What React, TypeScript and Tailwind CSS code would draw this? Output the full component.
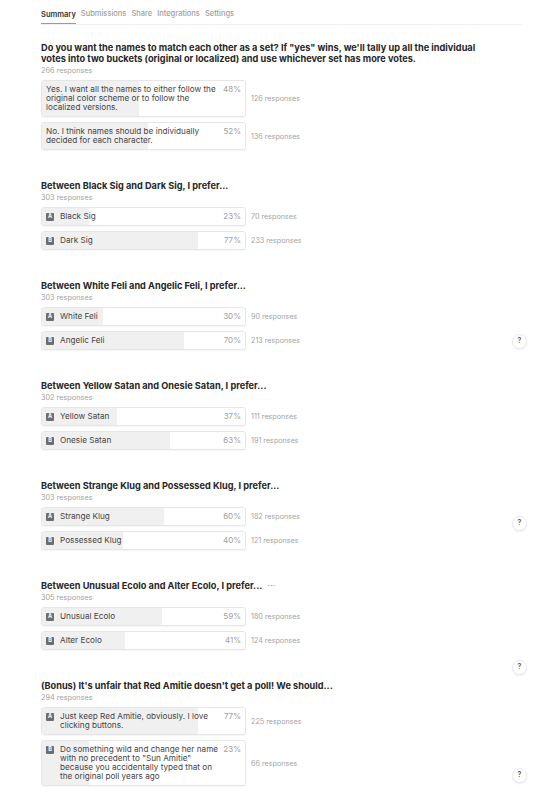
import React from "react";

type Opt = { letter?: string; text: string; pct: number; count: number };
type Q = { title: string; responses: number; options: Opt[]; dots?: boolean };

const questions: Q[] = [
  {
    title:
      'Do you want the names to match each other as a set? If "yes" wins, we\'ll tally up all the individual votes into two buckets (original or localized) and use whichever set has more votes.',
    responses: 266,
    options: [
      { text: "Yes. I want all the names to either follow the original color scheme or to follow the localized versions.", pct: 48, count: 126 },
      { text: "No. I think names should be individually decided for each character.", pct: 52, count: 136 },
    ],
  },
  {
    title: "Between Black Sig and Dark Sig, I prefer...",
    responses: 303,
    options: [
      { letter: "A", text: "Black Sig", pct: 23, count: 70 },
      { letter: "B", text: "Dark Sig", pct: 77, count: 233 },
    ],
  },
  {
    title: "Between White Feli and Angelic Feli, I prefer...",
    responses: 303,
    options: [
      { letter: "A", text: "White Feli", pct: 30, count: 90 },
      { letter: "B", text: "Angelic Feli", pct: 70, count: 213 },
    ],
  },
  {
    title: "Between Yellow Satan and Onesie Satan, I prefer...",
    responses: 302,
    options: [
      { letter: "A", text: "Yellow Satan", pct: 37, count: 111 },
      { letter: "B", text: "Onesie Satan", pct: 63, count: 191 },
    ],
  },
  {
    title: "Between Strange Klug and Possessed Klug, I prefer...",
    responses: 303,
    options: [
      { letter: "A", text: "Strange Klug", pct: 60, count: 182 },
      { letter: "B", text: "Possessed Klug", pct: 40, count: 121 },
    ],
  },
  {
    title: "Between Unusual Ecolo and Alter Ecolo, I prefer...",
    responses: 305,
    dots: true,
    options: [
      { letter: "A", text: "Unusual Ecolo", pct: 59, count: 180 },
      { letter: "B", text: "Alter Ecolo", pct: 41, count: 124 },
    ],
  },
  {
    title: "(Bonus) It's unfair that Red Amitie doesn't get a poll! We should...",
    responses: 294,
    options: [
      { letter: "A", text: "Just keep Red Amitie, obviously. I love clicking buttons.", pct: 77, count: 225 },
      { letter: "B", text: 'Do something wild and change her name with no precedent to "Sun Amitie" because you accidentally typed that on the original poll years ago', pct: 23, count: 66 },
    ],
  },
];

function Option({ o }: { o: Opt }) {
  return (
    <div className="flex items-center">
      <div className="relative w-[205px] shrink-0 overflow-hidden rounded-[3px] border border-[#e6e6e6] bg-white shadow-[0_1px_1px_rgba(0,0,0,0.04)]">
        <div className="absolute left-0 top-0 bottom-0 bg-[#f0f0f0]" style={{ width: `${o.pct}%` }} />
        <div className="relative flex items-start px-[4px] py-[4px]">
          {o.letter && (
            <div className="mt-[0.5px] mr-[6px] flex h-[8px] w-[8px] shrink-0 items-center justify-center rounded-[1px] bg-[#6e6e6e] text-[5.5px] font-bold leading-none text-white">
              {o.letter}
            </div>
          )}
          <div className="flex-1 pr-[4px] text-[8.2px] leading-[9px] text-[#454545]">{o.text}</div>
          <div className="w-[18px] shrink-0 text-right text-[8px] leading-[9px] text-[#a0a0a0]">{o.pct}%</div>
        </div>
      </div>
      <div className="ml-[5px] text-[7.2px] leading-[9px] text-[#a3a3a3]">{o.count} responses</div>
    </div>
  );
}

function Question({ q }: { q: Q }) {
  return (
    <div className="mb-[30px]">
      <div className="w-[450px] text-[9.2px] font-bold leading-[11px] text-[#262626]">
        {q.title}
        {q.dots && <span className="ml-[5px] font-normal text-[#9a9a9a]">···</span>}
      </div>
      <div className="mt-[2px] text-[7.3px] leading-[10px] text-[#a3a3a3]">{q.responses} responses</div>
      <div className="mt-[4px] flex flex-col gap-[5px]">
        {q.options.map((o, i) => (
          <Option key={i} o={o} />
        ))}
      </div>
    </div>
  );
}

function Help({ top, left }: { top: number; left: number }) {
  return (
    <div
      className="absolute flex h-[15px] w-[15px] items-center justify-center rounded-full border border-[#ececec] bg-white text-[7px] font-semibold text-[#555] shadow-[0_1px_2px_rgba(0,0,0,0.08)]"
      style={{ top, left }}
    >
      ?
    </div>
  );
}

export default function App() {
  const tabs = ["Summary", "Submissions", "Share", "Integrations", "Settings"];
  return (
    <div className="relative h-[800px] w-[536px] overflow-hidden bg-white" style={{ fontFamily: "Inter, 'Noto Sans', sans-serif" }}>
      <div className="ml-[41px] mr-[14px] flex h-[25px] items-end gap-[5px] border-b border-[#f0f0f0]">
        {tabs.map((t, i) => (
          <div
            key={t}
            className={
              i === 0
                ? "border-b-[1.5px] border-[#9a9a9a] pb-[3.5px] text-[7.5px] font-semibold leading-[10px] text-[#333]"
                : "pb-[5px] text-[7.5px] font-medium leading-[10px] text-[#a0a0a0]"
            }
          >
            {t}
          </div>
        ))}
      </div>
      <div className="ml-[41px] pt-[17px]">
        {questions.map((q, i) => (
          <Question key={i} q={q} />
        ))}
      </div>
      <Help top={334} left={512} />
      <Help top={516} left={512} />
      <Help top={660} left={512} />
      <Help top={768} left={512} />
    </div>
  );
}
